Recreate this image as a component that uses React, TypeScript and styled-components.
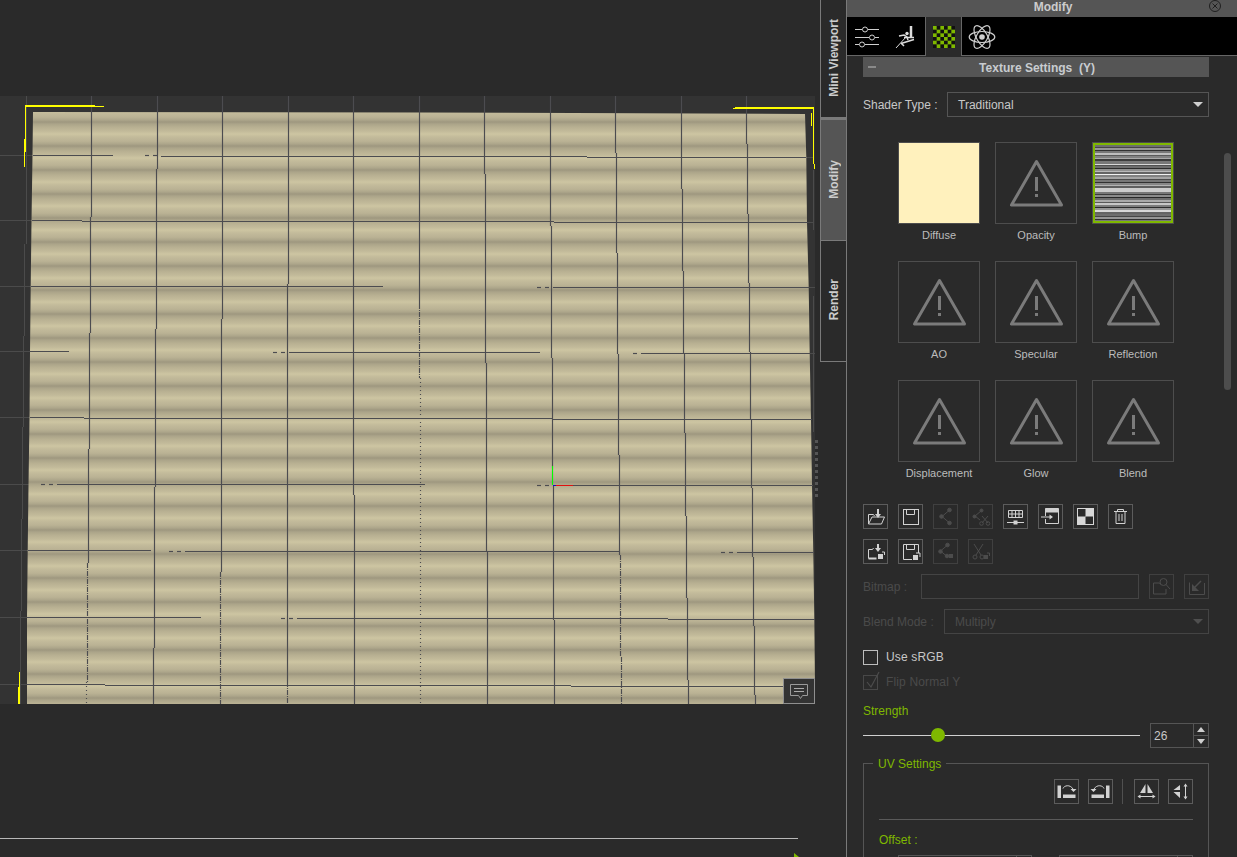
import React from "react";
import styled, { createGlobalStyle } from "styled-components";

const GREEN = "#7fb800";
const LINE = "#555555";

const Global = createGlobalStyle`
  html, body { margin: 0; padding: 0; background: #2a2a2a; overflow: hidden; }
  * { box-sizing: border-box; }
  body { font-family: "Liberation Sans", Arial, sans-serif; font-size: 12px; color: #c8c8c8; }
`;

const Page = styled.div`
  display: flex;
  width: 1237px;
  height: 857px;
  overflow: hidden;
  background: #2a2a2a;
`;
const Stage = styled.div`
  width: 821px;
  flex: none;
  display: flex;
  flex-direction: column;
`;
const TopSpace = styled.div`
  height: 96px;
  flex: none;
`;
const Canvas = styled.div`
  position: relative;
  width: 815px;
  height: 608px;
  flex: none;
  background: #333333;
  svg { display: block; }
`;
const Grip = styled.div`
  position: absolute;
  left: 815px;
  top: 344px;
  display: flex;
  flex-direction: column;
  gap: 3px;
  span { display: block; width: 3px; height: 3px; background: #555; }
`;
const CommentButton = styled.div`
  position: absolute;
  right: 0;
  bottom: 0;
  width: 32px;
  height: 26px;
  background: #333333;
  border: 1px solid #8f8f8f;
  display: flex;
  align-items: center;
  justify-content: center;
`;
const Bottom = styled.div`
  position: relative;
  flex: 1;
`;
const Timeline = styled.div`
  margin-top: 134px;
  width: 798px;
  height: 1px;
  background: #b8b8b8;
`;
const Playhead = styled.svg`
  position: absolute;
  left: 794px;
  top: 149px;
`;

const SideTabs = styled.div`
  width: 26px;
  flex: none;
  display: flex;
  flex-direction: column;
  margin-left: -1px;
`;
const SideTab = styled.div<{ $active?: boolean; $h: number; $top?: number }>`
  height: ${(p) => p.$h}px;
  flex: none;
  background: ${(p) => (p.$active ? "#555555" : "#2a2a2a")};
  border: 1px solid #7a7a7a;
  border-right: 0;
  border-top-width: ${(p) => p.$top ?? 0}px;
  border-bottom-width: ${(p) => (p.$active ? 0 : 1)}px;
  padding-bottom: 2px;
  display: flex;
  align-items: center;
  justify-content: center;
`;
const SideLabel = styled.span`
  writing-mode: vertical-rl;
  transform: rotate(180deg);
  font-weight: bold;
  font-size: 12px;
  color: #cccccc;
  white-space: nowrap;
`;

const Panel = styled.div`
  position: relative;
  width: 391px;
  flex: none;
  height: 857px;
  overflow: hidden;
  border-left: 1px solid #7a7a7a;
  background: #2a2a2a;
`;
const PanelTitle = styled.div`
  position: relative;
  height: 17px;
  background: #555555;
  color: #cccccc;
  font-weight: bold;
  font-size: 12px;
  line-height: 14px;
  text-align: center;
  padding-left: 22px;
`;
const CloseIcon = styled.svg`
  position: absolute;
  right: 15px;
  top: 0;
`;
const TabBar = styled.div`
  height: 39px;
  background: #000;
  border-bottom: 1px solid #666;
  display: flex;
  padding-left: 1px;
`;
const TabItem = styled.div<{ $active?: boolean; $w: number }>`
  width: ${(p) => p.$w}px;
  height: 39px;
  flex: none;
  background: ${(p) => (p.$active ? "#2a2a2a" : "transparent")};
  border-left: ${(p) => (p.$active ? "1px solid #666" : "0")};
  border-right: ${(p) => (p.$active ? "1px solid #666" : "0")};
  display: flex;
  align-items: center;
  justify-content: center;
`;
const Body = styled.div`
  padding: 1px 28px 0 16px;
`;
const SectionHeader = styled.div`
  position: relative;
  height: 20px;
  background: #555555;
  color: #c8ccd0;
  font-weight: bold;
  font-size: 12px;
  line-height: 22px;
  text-align: center;
  padding-left: 2px;
  white-space: pre;
`;
const Collapse = styled.span`
  position: absolute;
  left: 5px;
  top: 9px;
  width: 8px;
  height: 2px;
  background: #8a8a8a;
`;
const Row = styled.div<{ $mt: number; $gap?: number }>`
  display: flex;
  align-items: center;
  margin-top: ${(p) => p.$mt}px;
  gap: ${(p) => p.$gap ?? 0}px;
`;
const FieldLabel = styled.span<{ $w: number; $off?: boolean }>`
  width: ${(p) => p.$w}px;
  flex: none;
  font-size: 12px;
  color: ${(p) => (p.$off ? "#4a4a4a" : "#c8c8c8")};
  white-space: nowrap;
`;
const SelectBox = styled.div<{ $off?: boolean }>`
  flex: 1;
  height: 25px;
  border: 1px solid ${(p) => (p.$off ? "#444" : LINE)};
  padding: 0 5px 0 10px;
  display: flex;
  align-items: center;
  justify-content: space-between;
  color: ${(p) => (p.$off ? "#4a4a4a" : "#c8c8c8")};
`;
const Caret = styled.span<{ $off?: boolean }>`
  width: 0;
  height: 0;
  border-left: 5px solid transparent;
  border-right: 5px solid transparent;
  border-top: 5px solid ${(p) => (p.$off ? "#4f4f4f" : "#cfcfcf")};
`;
const ThumbGrid = styled.div`
  display: grid;
  grid-template-columns: repeat(3, 82px);
  grid-auto-rows: 119px;
  column-gap: 15px;
  margin: 25px 0 0 35px;
`;
const ThumbCell = styled.div`
  display: flex;
  flex-direction: column;
  align-items: center;
`;
const ThumbBox = styled.div<{ $bg?: string }>`
  width: 82px;
  height: 82px;
  border: 1px solid #4d4d4d;
  background: ${(p) => p.$bg ?? "transparent"};
  svg { display: block; }
`;
const ThumbLabel = styled.div`
  margin-top: 5px;
  font-size: 11px;
  line-height: 13px;
  color: #bcbcbc;
  white-space: nowrap;
`;
const ToolButton = styled.div<{ $off?: boolean }>`
  width: 25px;
  height: 25px;
  flex: none;
  border: 1px solid ${(p) => (p.$off ? "#404040" : "#5c5c5c")};
  color: ${(p) => (p.$off ? "#4c4c4c" : "#d2d2d2")};
  svg { display: block; }
`;
const BitmapInput = styled.div`
  width: 218px;
  height: 25px;
  flex: none;
  border: 1px solid #444;
  margin-right: 10px;
`;
const BitmapGap = styled.div`
  width: 10px;
  flex: none;
`;
const CheckBox = styled.div<{ $off?: boolean }>`
  position: relative;
  width: 15px;
  height: 15px;
  flex: none;
  border: 1px solid ${(p) => (p.$off ? "#484848" : "#bdbdbd")};
  margin-right: 8px;
`;
const CheckMark = styled.svg`
  position: absolute;
  left: 0;
  top: -5px;
`;
const CheckText = styled.span<{ $off?: boolean }>`
  font-size: 12px;
  line-height: 12px;
  padding-bottom: 2px;
  letter-spacing: 0.15px;
  color: ${(p) => (p.$off ? "#4a4a4a" : "#c8c8c8")};
`;
const GreenLabel = styled.div<{ $mt: number }>`
  margin-top: ${(p) => p.$mt}px;
  line-height: 14px;
  font-size: 12px;
  color: ${GREEN};
`;
const SliderTrack = styled.div`
  position: relative;
  width: 277px;
  height: 1px;
  flex: none;
  background: #d0d0d0;
  margin-right: 10px;
`;
const SliderThumb = styled.div`
  position: absolute;
  left: 68px;
  top: -7px;
  width: 14px;
  height: 14px;
  border-radius: 50%;
  background: ${GREEN};
`;
const Spinner = styled.div<{ $w: number }>`
  width: ${(p) => p.$w}px;
  height: 25px;
  flex: none;
  border: 1px solid ${LINE};
  display: flex;
  align-items: center;
  padding-left: 3px;
  color: #c8c8c8;
`;
const SpinValue = styled.span`
  flex: 1;
`;
const SpinArrows = styled.div`
  width: 15px;
  height: 23px;
  flex: none;
  border-left: 1px solid ${LINE};
  display: flex;
  flex-direction: column;
`;
const SpinCell = styled.div<{ $down?: boolean }>`
  flex: 1;
  display: flex;
  align-items: center;
  justify-content: center;
  border-top: ${(p) => (p.$down ? `1px solid ${LINE}` : "0")};
  &::after {
    content: "";
    border-left: 4px solid transparent;
    border-right: 4px solid transparent;
    border-${(p) => (p.$down ? "top" : "bottom")}: 5px solid #cfcfcf;
  }
`;
const Group = styled.fieldset`
  margin: 8px 0 0;
  padding: 9px 15px 20px;
  min-width: 0;
  border: 1px solid ${LINE};
`;
const GroupLegend = styled.legend`
  margin-left: -6px;
  padding: 0 5px;
  height: 14px;
  line-height: 16px;
  font-size: 12px;
  color: ${GREEN};
`;
const UvTools = styled.div`
  display: flex;
  justify-content: flex-end;
  align-items: center;
  gap: 9px;
`;
const UvDivider = styled.div`
  width: 1px;
  height: 25px;
  background: #505050;
  margin-right: 2px;
`;
const Rule = styled.div`
  height: 1px;
  background: #5a5a5a;
  margin-top: 15px;
`;
const OffsetRow = styled.div`
  display: flex;
  gap: 27px;
  margin: 8px 0 0 19px;
`;
const ScrollThumb = styled.div`
  position: absolute;
  left: 377px;
  top: 153px;
  width: 7px;
  height: 237px;
  border-radius: 4px;
  background: #4d4d4d;
`;

/* ---------- cloth drawing data ---------- */
type Seg = [number, number, number?];
const V: Seg[][] = [
  [[91, 217], [90, 333], [89, 449], [88, 563], [87, 682, 1], [86, 704, 2]],
  [[157, 169], [156, 329], [155, 487], [154, 648], [153, 704]],
  [[222, 319], [221, 572], [220, 704, 1]],
  [[288, 284], [287, 682], [287, 704, 1]],
  [[353, 495], [354, 704]],
  [[419, 304], [419, 378, 1], [420, 704, 2]],
  [[484, 174], [485, 363], [486, 552], [487, 704]],
  [[550, 226], [551, 358], [552, 485], [553, 620], [554, 704]],
  [[615, 153], [616, 253], [617, 354], [618, 455], [619, 555], [620, 657, 1], [621, 704, 1]],
  [[681, 189], [682, 271], [683, 353], [684, 433], [685, 516], [686, 598], [687, 680], [688, 704]],
  [[746, 144], [747, 214], [748, 283], [749, 352], [750, 420], [751, 488], [752, 557], [753, 626], [754, 695], [755, 704]],
];
/* y, x start, x end */
const H: [number, number, number][] = [
  [155, 33, 113], [156, 161, 587], [157, 587, 806], [155, 145, 149], [155, 153, 157],
  [220, 32, 82], [221, 82, 554], [222, 554, 808],
  [286, 31, 383], [287, 553, 809], [287, 537, 541], [287, 545, 549],
  [351, 30, 69], [352, 289, 540], [353, 641, 810], [352, 273, 277], [352, 281, 285], [353, 633, 637],
  [417, 30, 84], [418, 84, 553], [419, 553, 812],
  [484, 57, 425], [484, 41, 45], [484, 49, 53], [485, 553, 813], [485, 537, 541], [485, 545, 549],
  [550, 28, 151], [551, 185, 619], [551, 169, 173], [551, 177, 181], [552, 737, 814], [552, 721, 725], [552, 729, 733],
  [617, 27, 201], [618, 297, 668], [619, 668, 815], [618, 281, 285], [618, 289, 293],
  [684, 27, 105], [685, 105, 571], [686, 571, 784],
];
const bgV: [number, number, number][] = [
  [26, 96, 244], [24, 244, 336], [23, 336, 427], [22, 427, 519], [21, 519, 611], [20, 611, 704],
  [813, 170, 230], [813, 296, 432],
];
const bgH: [number, number, number][] = [
  [155, 0, 33], [220, 0, 32], [286, 0, 31], [351, 0, 30], [417, 0, 30], [484, 0, 29], [550, 0, 28], [617, 0, 27], [684, 0, 27],
  [157, 806, 813], [222, 808, 813], [287, 809, 815], [353, 810, 815],
];
const outline =
  "M33 112 L420 112.5 L805 114 L806.3 157 L807 222 L808.7 287 L809.7 353 L811 419 L812 485 L813.3 552 L814.3 619 L815 686 L815 704 L27 704 L27 618 L27.7 551 L28.5 485 L29.5 418 L30 352 L30.7 286 L31.5 221 L32.5 155 Z";

function segPaths(line: Seg[]) {
  let y = 96;
  return line.map(([x, end, style], i) => {
    const d = `M${x + 0.5} ${y}V${end}`;
    y = end;
    return <path key={i} d={d} strokeDasharray={style === 1 ? "5 1 1 1" : style === 2 ? "1 3" : undefined} />;
  });
}

const Cloth = () => (
  <svg width={815} height={608} viewBox="0 96 815 608">
    <defs>
      <linearGradient id="stripes" gradientUnits="userSpaceOnUse" x1="0" y1="110" x2="0" y2="134" spreadMethod="repeat">
        <stop offset="0" stopColor="#cdc5a2" />
        <stop offset="0.12" stopColor="#c3bb9b" />
        <stop offset="0.3" stopColor="#bab294" />
        <stop offset="0.42" stopColor="#aca58a" />
        <stop offset="0.5" stopColor="#9e977f" />
        <stop offset="0.58" stopColor="#aba489" />
        <stop offset="0.72" stopColor="#b8b092" />
        <stop offset="0.88" stopColor="#c2ba9a" />
        <stop offset="1" stopColor="#cdc5a2" />
      </linearGradient>
    </defs>
    <g fill="none" stroke="#4b4b4b" shapeRendering="crispEdges">
      {bgV.map(([x, a, b], i) => <path key={i} d={`M${x + 0.5} ${a}V${b}`} />)}
      {bgH.map(([y, a, b], i) => <path key={i} d={`M${a} ${y + 0.5}H${b}`} />)}
    </g>
    <path d={outline} fill="url(#stripes)" />
    <g fill="none" stroke="#4c4c50" strokeWidth="1.15">
      {V.map((l, i) => <g key={i}>{segPaths(l)}</g>)}
      {H.map(([y, a, b], i) => <path key={i} d={`M${a} ${y + 0.5}H${b}`} />)}
    </g>
    <g fill="#ffff00" shapeRendering="crispEdges">
      <rect x="26" y="105" width="69" height="2" />
      <rect x="95" y="106" width="9" height="1" />
      <rect x="25" y="105" width="1" height="47" />
      <rect x="24" y="139" width="2" height="13" />
      <rect x="24" y="152" width="1" height="15" />
      <rect x="735" y="107" width="78" height="2" />
      <rect x="733" y="108" width="2" height="1" />
      <rect x="813" y="107" width="1" height="57" />
      <rect x="811" y="113" width="1" height="13" />
      <rect x="814" y="164" width="1" height="5" />
      <rect x="19" y="672" width="1" height="32" />
      <rect x="18" y="687" width="2" height="17" />
    </g>
    <rect x="552" y="466" width="1" height="19" fill="#00ff00" shapeRendering="crispEdges" />
    <rect x="553" y="485" width="20" height="1" fill="#e01010" shapeRendering="crispEdges" />
    <rect x="553" y="485" width="3" height="1" fill="#1010c0" shapeRendering="crispEdges" />
  </svg>
);

/* ---------- icons ---------- */
const stroke = { fill: "none", stroke: "currentColor", strokeWidth: 1 } as const;
const icons: Record<string, React.ReactNode> = {
  open: (
    <g {...stroke}>
      <path d="M5.5 20V10.5h5l1 1.5" />
      <path d="M5.5 20h13l3-7H9l-3.5 7z" />
      <path d="M15 5v7" strokeWidth="2" />
      <path d="M12 10h6l-3 4z" fill="currentColor" stroke="none" />
    </g>
  ),
  save: (
    <g {...stroke}>
      <rect x="5.5" y="5.5" width="15" height="15" />
      <path d="M8.5 5.5v5h8v-5" />
    </g>
  ),
  share: (
    <g {...stroke}>
      <path d="M16 6.5L9 12.5l7 6" />
      <circle cx="16.5" cy="6" r="1.8" fill="currentColor" />
      <circle cx="8.5" cy="12.5" r="1.8" fill="currentColor" />
      <circle cx="16.5" cy="19" r="1.8" fill="currentColor" />
    </g>
  ),
  shareCut: (
    <g {...stroke}>
      <path d="M13 7l-6 5 5 4" />
      <circle cx="13.5" cy="6.5" r="1.5" fill="currentColor" />
      <circle cx="6.5" cy="12.5" r="1.5" fill="currentColor" />
      <path d="M14 12l6 7M20 12l-6 7" />
      <circle cx="13.5" cy="19.5" r="1.8" />
      <circle cx="20" cy="19.5" r="1.8" />
    </g>
  ),
  grid: (
    <g {...stroke}>
      <path d="M5.5 6.5h14v7h-14zM5.5 10h14M9 6.5v7M12.5 6.5v7M16 6.5v7" />
      <path d="M4 18.5h17" />
      <rect x="10.5" y="16.5" width="4" height="4" fill="currentColor" stroke="none" />
    </g>
  ),
  load: (
    <g {...stroke}>
      <path d="M7.5 12V4.500h13v15h-13V15" />
      <rect x="7.5" y="4.500" width="13" height="4" fill="currentColor" stroke="none" />
      <path d="M3 13h10" />
      <path d="M11.5 10.5l3.5 2.5-3.5 2.5z" fill="currentColor" stroke="none" />
    </g>
  ),
  checker: (
    <g>
      <rect x="5" y="5" width="15" height="15" fill="#d8d8d8" />
      <rect x="5" y="5" width="7.5" height="7.5" fill="#2a2a2a" />
      <rect x="12.5" y="12.5" width="7.5" height="7.5" fill="#2a2a2a" />
      <rect x="4.5" y="4.500" width="16" height="16" fill="none" stroke="#d8d8d8" />
    </g>
  ),
  trash: (
    <g {...stroke}>
      <path d="M6 7.500h13M9.500 7.500V5.500h6v2M8 7.500v12h9v-12M11 10v7M14 10v7" />
    </g>
  ),
  open2: (
    <g {...stroke}>
      <path d="M5.5 19.5V10.5h4l1-1.5" />
      <path d="M5.5 19.5h8" strokeWidth="2" />
      <path d="M15 5v6" strokeWidth="2" />
      <path d="M12 9h6l-3 4z" fill="currentColor" stroke="none" />
      <rect x="15" y="15" width="5" height="5" fill="currentColor" stroke="none" />
      <path d="M19 13h2.5v3" />
    </g>
  ),
  save2: (
    <g {...stroke}>
      <path d="M14 20.5H5.500v-15h15V14" />
      <path d="M8.500 5.500v5h8v-5" />
      <rect x="15" y="16" width="5" height="5" fill="currentColor" stroke="none" />
      <path d="M18 14h4v4" />
    </g>
  ),
  share2: (
    <g {...stroke}>
      <path d="M14 6.500L7.500 12l6 5" />
      <circle cx="14.5" cy="6" r="1.8" fill="currentColor" />
      <circle cx="7.5" cy="12.5" r="1.8" fill="currentColor" />
      <circle cx="14" cy="17" r="1.8" fill="currentColor" />
      <rect x="16" y="15" width="4" height="4" fill="currentColor" stroke="none" />
    </g>
  ),
  cut2: (
    <g {...stroke}>
      <path d="M6 5l7 11M15 5L8 16" />
      <circle cx="7" cy="18" r="2" />
      <circle cx="14" cy="18" r="2" />
      <rect x="16" y="16" width="4" height="4" fill="currentColor" stroke="none" />
      <path d="M19 14h2.500v3" />
    </g>
  ),
  browse: (
    <g {...stroke}>
      <path d="M4.500 20V9h6l1 1.500M4.500 20H17v-5" />
      <circle cx="14.5" cy="8" r="3.5" />
      <path d="M17 10.500l4 4.500" />
    </g>
  ),
  corner: (
    <g {...stroke}>
      <path d="M5.500 8.500v12h15V9" />
      <path d="M17 7l-7.500 7.500" strokeWidth="1.5" />
      <path d="M8 10v7h7z" fill="currentColor" stroke="none" />
    </g>
  ),
  rotR: (
    <g>
      <rect x="3.5" y="6.500" width="3.500" height="12.500" fill="currentColor" />
      <rect x="9" y="15.500" width="12.500" height="3.500" fill="currentColor" />
      <path d="M9 9.500c1-3 7-4.500 10 .5" {...stroke} />
      <path d="M16.500 10h6l-3 3z" fill="currentColor" />
    </g>
  ),
  rotL: (
    <g>
      <rect x="18" y="6.500" width="3.500" height="12.500" fill="currentColor" />
      <rect x="3.500" y="15.500" width="12.500" height="3.500" fill="currentColor" />
      <path d="M16 9.500c-1-3-7-4.500-10 .5" {...stroke} />
      <path d="M2.500 10h6l-3 3z" fill="currentColor" />
    </g>
  ),
  flipH: (
    <g>
      <path d="M11.500 5v9h-5.500zM13.500 5v9h5.500z" fill="currentColor" />
      <path d="M6 17.500h13" {...stroke} />
      <path d="M6.500 15.500v4L3.500 17.500zM18.500 15.500v4l3-2z" fill="currentColor" />
    </g>
  ),
  flipV: (
    <g>
      <path d="M12 11H5.500L12 6zM12 13H5.500L12 19z" fill="currentColor" />
      <path d="M17.500 6v13" {...stroke} />
      <path d="M15.500 7.500h4l-2-3zM15.500 17.500h4l-2 3z" fill="currentColor" />
    </g>
  ),
};
const Tool = ({ name, off }: { name: string; off?: boolean }) => (
  <ToolButton $off={off}>
    <svg width="23" height="23" viewBox="1 1 23 23">{icons[name]}</svg>
  </ToolButton>
);

const Warning = () => (
  <svg width="80" height="80" viewBox="1 1 80 80">
    <path d="M41.5 19.500L16.500 63h50z" fill="none" stroke="#7b7b7b" strokeWidth="3" strokeLinejoin="round" />
    <rect x="40" y="35" width="3" height="14" fill="#7b7b7b" />
    <rect x="40" y="52" width="3" height="3" fill="#7b7b7b" />
  </svg>
);

const bands: [number, number][] = [
  [110, 2], [70, 1], [150, 2], [50, 1], [120, 2], [190, 2], [90, 1], [130, 2], [170, 1], [60, 2], [120, 3], [215, 1], [80, 1], [110, 2], [45, 1], [145, 2], [185, 1],
  [100, 2], [240, 1], [130, 2], [165, 2], [75, 1], [120, 2], [50, 1], [135, 2], [180, 1], [95, 2], [205, 4], [120, 2], [60, 1], [140, 2], [40, 1], [110, 2], [170, 2], [90, 1], [200, 2], [125, 2], [45, 1], [150, 2], [215, 2], [100, 2],
  [110, 2], [70, 1], [150, 2], [50, 1], [120, 2], [190, 2], [90, 1], [130, 2],
];
const BumpMap = () => {
  let y = 2;
  return (
    <svg width="80" height="80" viewBox="0 0 80 80" shapeRendering="crispEdges">
      <rect width="80" height="80" fill={GREEN} />
      {bands.map(([g, h], i) => {
        const r = <rect key={i} x="2" y={y} width="76" height={Math.min(h, Math.max(0, 78 - y))} fill={`rgb(${g},${g},${g})`} />;
        y += h;
        return r;
      })}
    </svg>
  );
};

const Checker = () => {
  const cells = [];
  for (let r = 0; r < 6; r++) for (let c = 0; c < 6; c++) if ((r + c) % 2 === 1) cells.push(<rect key={`${r}${c}`} x={c * 3.67} y={r * 3.67} width="3.67" height="3.67" fill="#111" />);
  return (
    <svg width="22" height="22" viewBox="0 0 22 22">
      <rect width="22" height="22" fill={GREEN} />
      {cells}
    </svg>
  );
};

const SlidersIcon = () => (
  <svg width="24" height="22" viewBox="0 0 24 22" fill="none" stroke="#d0d0d0">
    <path d="M0 3.500h7M13 3.500h11M0 11.500h14M20 11.500h4M0 18.500h4M10 18.500h14" />
    <circle cx="10" cy="3.500" r="2.500" />
    <circle cx="17" cy="11.500" r="2.500" />
    <circle cx="7" cy="18.500" r="2.500" />
  </svg>
);
const RunnerIcon = () => (
  <svg width="22" height="24" viewBox="0 0 22 24" fill="none" stroke="#dcdcdc">
    <path d="M17 1v12" strokeWidth="2.500" />
    <path d="M10 12.500h10" strokeWidth="1.500" />
    <path d="M2 23l10-11" />
    <path d="M7 18.500l13-4" strokeWidth="1.500" />
    <path d="M7 18l3 3M5 11l5-1 3 2 1 3" strokeWidth="1.500" />
    <circle cx="13" cy="8.500" r="1.700" fill="#dcdcdc" stroke="none" />
  </svg>
);
const AtomIcon = () => (
  <svg width="28" height="28" viewBox="-14 -14 28 28" fill="none" stroke="#cfcfcf" strokeWidth="1.200">
    <ellipse rx="12.800" ry="5.500" />
    <ellipse rx="12.800" ry="5.500" transform="rotate(60)" />
    <ellipse rx="12.800" ry="5.500" transform="rotate(120)" />
    <circle r="2.800" fill="#cfcfcf" stroke="none" />
  </svg>
);

const thumbs: { label: string; kind?: "diffuse" | "bump" }[] = [
  { label: "Diffuse", kind: "diffuse" },
  { label: "Opacity" },
  { label: "Bump", kind: "bump" },
  { label: "AO" },
  { label: "Specular" },
  { label: "Reflection" },
  { label: "Displacement" },
  { label: "Glow" },
  { label: "Blend" },
];
const row1: [string, boolean?][] = [["open"], ["save"], ["share", true], ["shareCut", true], ["grid"], ["load"], ["checker"], ["trash"]];
const row2: [string, boolean?][] = [["open2"], ["save2"], ["share2", true], ["cut2", true]];

export default function App() {
  return (
    <Page>
      <Global />
      <Stage>
        <TopSpace />
        <Canvas>
          <Cloth />
          <Grip>
            {Array.from({ length: 10 }, (_, i) => <span key={i} />)}
          </Grip>
          <CommentButton>
            <svg width="20" height="17" viewBox="0 0 20 17" fill="none" stroke="#9a9a9a">
              <path d="M1.500 1.500h17v11h-5l-2 3-2-3h-8z" />
              <path d="M5 5.500h10M5 8.500h10" stroke="#aaaaaa" />
            </svg>
          </CommentButton>
        </Canvas>
        <Bottom>
          <Timeline />
          <Playhead width="6" height="8" viewBox="0 0 6 8">
            <path d="M0 0l5 4v4H0z" fill={GREEN} />
          </Playhead>
        </Bottom>
      </Stage>
      <SideTabs>
        <SideTab $h={118}><SideLabel>Mini Viewport</SideLabel></SideTab>
        <SideTab $h={122} $active $top={2}><SideLabel>Modify</SideLabel></SideTab>
        <SideTab $h={122} $top={1}><SideLabel>Render</SideLabel></SideTab>
      </SideTabs>
      <Panel>
        <PanelTitle>
          Modify
          <CloseIcon width="14" height="14" viewBox="0 0 14 14" fill="none" stroke="#1f1f1f">
            <circle cx="7" cy="6" r="5.500" />
            <path d="M4.500 3.500l5 5M9.500 3.500l-5 5" />
          </CloseIcon>
        </PanelTitle>
        <TabBar>
          <TabItem $w={37}><SlidersIcon /></TabItem>
          <TabItem $w={40}><RunnerIcon /></TabItem>
          <TabItem $w={37} $active><Checker /></TabItem>
          <TabItem $w={40}><AtomIcon /></TabItem>
        </TabBar>
        <Body>
          <SectionHeader>
            <Collapse />
            {"Texture Settings  (Y)"}
          </SectionHeader>
          <Row $mt={15}>
            <FieldLabel $w={84}>Shader Type :</FieldLabel>
            <SelectBox>Traditional<Caret /></SelectBox>
          </Row>
          <ThumbGrid>
            {thumbs.map((t) => (
              <ThumbCell key={t.label}>
                <ThumbBox $bg={t.kind === "diffuse" ? "#fff1bd" : undefined}>
                  {t.kind === "bump" ? <BumpMap /> : t.kind === "diffuse" ? null : <Warning />}
                </ThumbBox>
                <ThumbLabel>{t.label}</ThumbLabel>
              </ThumbCell>
            ))}
          </ThumbGrid>
          <Row $mt={5} $gap={10}>
            {row1.map(([n, off]) => <Tool key={n} name={n} off={off} />)}
          </Row>
          <Row $mt={10} $gap={10}>
            {row2.map(([n, off]) => <Tool key={n} name={n} off={off} />)}
          </Row>
          <Row $mt={10}>
            <FieldLabel $w={58} $off>Bitmap :</FieldLabel>
            <BitmapInput />
            <Tool name="browse" off />
            <BitmapGap />
            <Tool name="corner" off />
          </Row>
          <Row $mt={10}>
            <FieldLabel $w={81} $off>Blend Mode :</FieldLabel>
            <SelectBox $off>Multiply<Caret $off /></SelectBox>
          </Row>
          <Row $mt={16}>
            <CheckBox />
            <CheckText>Use sRGB</CheckText>
          </Row>
          <Row $mt={10}>
            <CheckBox $off>
              <CheckMark width="16" height="18" viewBox="0 0 16 18" fill="none" stroke="#4c4c4c" strokeWidth="1.200">
                <path d="M3 11l4 5 8-15" />
              </CheckMark>
            </CheckBox>
            <CheckText $off>Flip Normal Y</CheckText>
          </Row>
          <GreenLabel $mt={14}>Strength</GreenLabel>
          <Row $mt={5}>
            <SliderTrack><SliderThumb /></SliderTrack>
            <Spinner $w={59}>
              <SpinValue>26</SpinValue>
              <SpinArrows><SpinCell /><SpinCell $down /></SpinArrows>
            </Spinner>
          </Row>
          <Group>
            <GroupLegend>UV Settings</GroupLegend>
            <UvTools>
              <Tool name="rotR" />
              <Tool name="rotL" />
              <UvDivider />
              <Tool name="flipH" />
              <Tool name="flipV" />
            </UvTools>
            <Rule />
            <GreenLabel $mt={13}>Offset :</GreenLabel>
            <OffsetRow>
              <Spinner $w={134}><SpinValue /><SpinArrows><SpinCell /><SpinCell $down /></SpinArrows></Spinner>
              <Spinner $w={134}><SpinValue /><SpinArrows><SpinCell /><SpinCell $down /></SpinArrows></Spinner>
            </OffsetRow>
          </Group>
        </Body>
        <ScrollThumb />
      </Panel>
    </Page>
  );
}
